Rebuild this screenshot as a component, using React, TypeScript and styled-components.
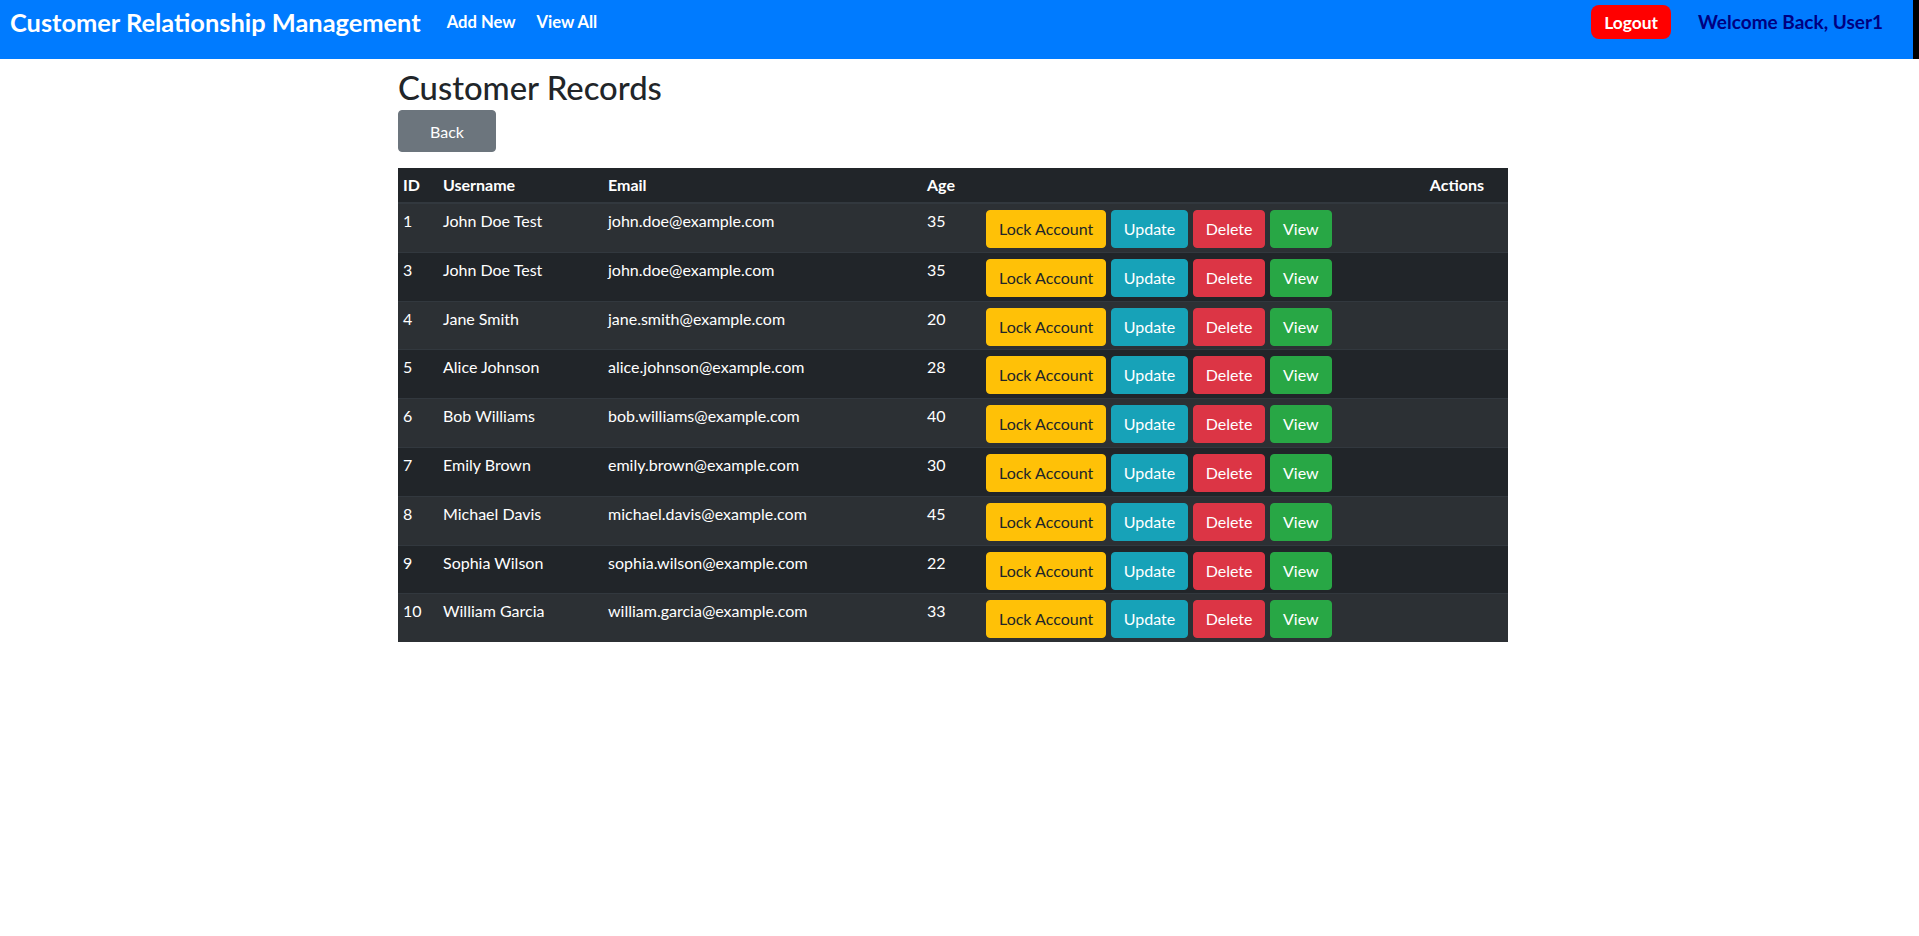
import styled, { createGlobalStyle } from 'styled-components';

type Customer = {
  id: number;
  username: string;
  email: string;
  age: number;
};

type Variant = 'warning' | 'info' | 'danger' | 'success';

const CUSTOMERS: Customer[] = [
  { id: 1, username: 'John Doe Test', email: 'john.doe@example.com', age: 35 },
  { id: 3, username: 'John Doe Test', email: 'john.doe@example.com', age: 35 },
  { id: 4, username: 'Jane Smith', email: 'jane.smith@example.com', age: 20 },
  { id: 5, username: 'Alice Johnson', email: 'alice.johnson@example.com', age: 28 },
  { id: 6, username: 'Bob Williams', email: 'bob.williams@example.com', age: 40 },
  { id: 7, username: 'Emily Brown', email: 'emily.brown@example.com', age: 30 },
  { id: 8, username: 'Michael Davis', email: 'michael.davis@example.com', age: 45 },
  { id: 9, username: 'Sophia Wilson', email: 'sophia.wilson@example.com', age: 22 },
  { id: 10, username: 'William Garcia', email: 'william.garcia@example.com', age: 33 },
];

const ACTIONS: { label: string; variant: Variant }[] = [
  { label: 'Lock Account', variant: 'warning' },
  { label: 'Update', variant: 'info' },
  { label: 'Delete', variant: 'danger' },
  { label: 'View', variant: 'success' },
];

const VARIANTS: Record<Variant, { bg: string; fg: string }> = {
  warning: { bg: '#ffc107', fg: '#212529' },
  info: { bg: '#17a2b8', fg: '#ffffff' },
  danger: { bg: '#dc3545', fg: '#ffffff' },
  success: { bg: '#28a745', fg: '#ffffff' },
};

export default function App() {
  return (
    <>
      <GlobalStyle />
      <Header>
        <NavBar>
          <Brand>Customer Relationship Management</Brand>
          <NavLinks>
            <NavLink>Add New</NavLink>
            <NavLink>View All</NavLink>
          </NavLinks>
          <NavRight>
            <LogoutButton>Logout</LogoutButton>
            <Welcome>Welcome Back, User1</Welcome>
          </NavRight>
        </NavBar>
      </Header>
      <Main>
        <Title>Customer Records</Title>
        <BackButton>Back</BackButton>
        <Table>
          <colgroup>
            <col style={{ width: 40 }} />
            <col style={{ width: 165 }} />
            <col style={{ width: 319 }} />
            <col style={{ width: 59 }} />
            <col />
          </colgroup>
          <thead>
            <tr>
              <HeadCell>ID</HeadCell>
              <HeadCell>Username</HeadCell>
              <HeadCell>Email</HeadCell>
              <HeadCell>Age</HeadCell>
              <HeadCell $align="right">Actions</HeadCell>
            </tr>
          </thead>
          <tbody>
            {CUSTOMERS.map((c) => (
              <Row key={c.id}>
                <Cell>{c.id}</Cell>
                <Cell>{c.username}</Cell>
                <Cell>{c.email}</Cell>
                <Cell>{c.age}</Cell>
                <ActionCell>
                  <ActionGroup>
                    {ACTIONS.map((a) => (
                      <ActionButton key={a.label} $variant={a.variant}>
                        {a.label}
                      </ActionButton>
                    ))}
                  </ActionGroup>
                </ActionCell>
              </Row>
            ))}
          </tbody>
        </Table>
      </Main>
    </>
  );
}

const GlobalStyle = createGlobalStyle`
  body {
    margin: 0;
    background: #fff;
    color: #212529;
    font-family: Lato, "Liberation Sans", sans-serif;
    font-size: 16px;
    line-height: 1.5;
  }
  * { box-sizing: border-box; }
`;

const Header = styled.header`
  background: #000;
  padding-right: 6px;
`;

const NavBar = styled.nav`
  height: 59px;
  background: #007bff;
  display: flex;
  align-items: flex-start;
  padding: 5px 30px 0 10px;
`;

const Brand = styled.div`
  color: #fff;
  font-weight: 700;
  font-size: 25.4px;
  line-height: 34px;
  white-space: nowrap;
`;

const NavLinks = styled.div`
  display: flex;
  gap: 21px;
  margin-left: 26px;
`;

const NavLink = styled.a`
  color: #fff;
  font-weight: 700;
  font-size: 16.6px;
  line-height: 34px;
  cursor: pointer;
`;

const NavRight = styled.div`
  margin-left: auto;
  display: flex;
  align-items: center;
  gap: 27px;
`;

const LogoutButton = styled.button`
  height: 34px;
  padding: 0 13px;
  border: none;
  border-radius: 8px;
  background: #ff0000;
  color: #fff;
  font-family: inherit;
  font-weight: 700;
  font-size: 17.4px;
  cursor: pointer;
`;

const Welcome = styled.span`
  color: #000080;
  font-weight: 700;
  font-size: 19px;
`;

const Main = styled.main`
  width: 1110px;
  margin-left: 398px;
  padding-top: 10px;
`;

const Title = styled.h2`
  margin: 0 0 3px;
  font-size: 32.8px;
  font-weight: 500;
  line-height: 38px;
`;

const BackButton = styled.button`
  display: block;
  height: 42px;
  padding: 0 31px;
  border: 1px solid #6c757d;
  border-radius: 4px;
  background: #6c757d;
  color: #fff;
  font-family: inherit;
  font-size: 16px;
  cursor: pointer;
`;

const Table = styled.table`
  width: 100%;
  margin-top: 16px;
  border-collapse: collapse;
  table-layout: fixed;
  background: #212529;
  color: #fff;
`;

const HeadCell = styled.th<{ $align?: 'left' | 'right' }>`
  padding: 5px 5px;
  text-align: ${(p) => p.$align ?? 'left'};
  padding-right: ${(p) => (p.$align === 'right' ? '24px' : '5px')};
  font-weight: 700;
  line-height: 24px;
  border-bottom: 2px solid #32383e;
`;

const Row = styled.tr`
  border-top: 1px solid #32383e;

  &:nth-child(odd) {
    background: #2c3034;
  }
`;

const Cell = styled.td`
  padding: 5px 5px 0;
  vertical-align: top;
  line-height: 24px;
  white-space: nowrap;
`;

const ActionCell = styled.td`
  padding: 6px 5px 3.8px;
  vertical-align: top;
`;

const ActionGroup = styled.div`
  display: flex;
  gap: 4.5px;
`;

const ActionButton = styled.button<{ $variant: Variant }>`
  height: 38px;
  padding: 0 12px;
  border: 1px solid ${(p) => VARIANTS[p.$variant].bg};
  border-radius: 4px;
  background: ${(p) => VARIANTS[p.$variant].bg};
  color: ${(p) => VARIANTS[p.$variant].fg};
  font-family: inherit;
  font-size: 16px;
  line-height: 24px;
  cursor: pointer;
`;
